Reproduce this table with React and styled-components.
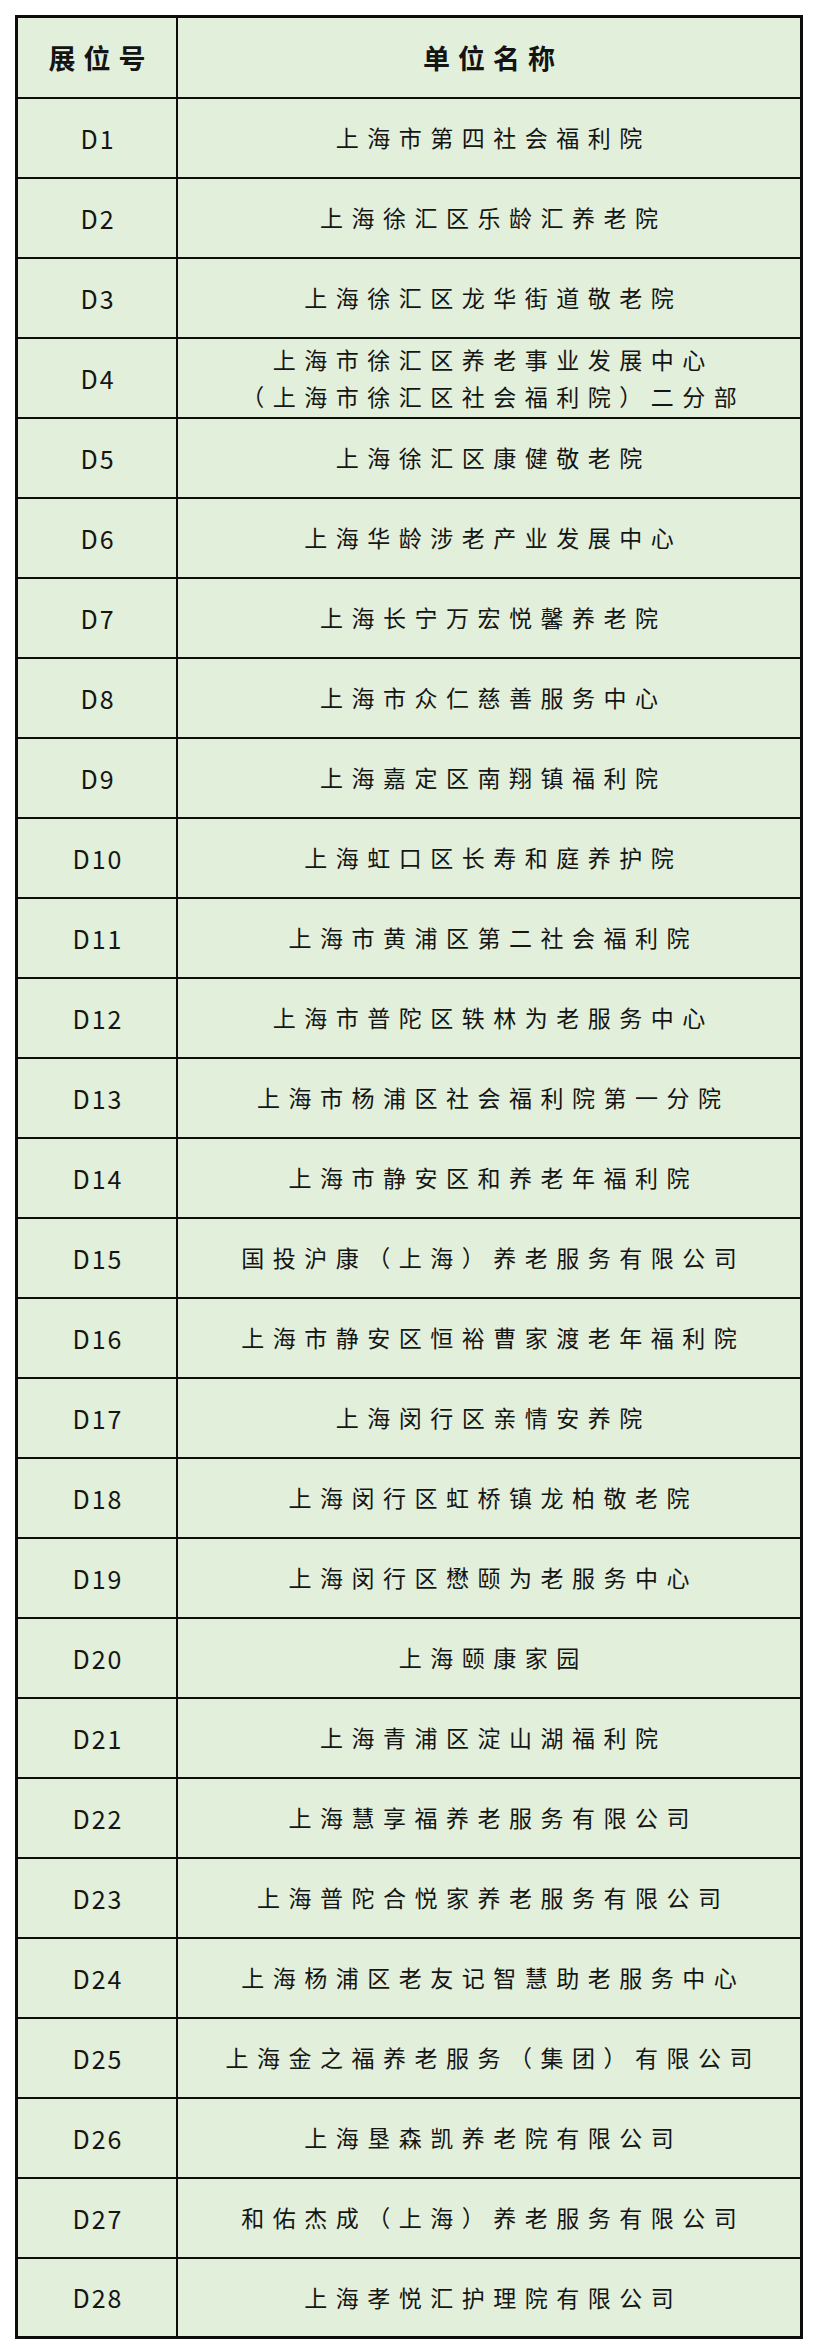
import React from "react";
import styled, { createGlobalStyle } from "styled-components";

const GlobalStyle = createGlobalStyle`
  html, body {
    margin: 0;
    padding: 0;
    background: #ffffff;
  }
  body {
    font-family: "Noto Sans CJK SC", "Noto Sans", sans-serif;
    color: #1b1b1b;
  }
`;

const Page = styled.div`
  width: 818px;
  min-height: 2352px;
  box-sizing: border-box;
  padding: 15px 15px 0 15px;
  background: #ffffff;
`;

const Table = styled.table`
  width: 788px;
  border-collapse: collapse;
  border: 3px solid #0d0d0d;
  background: #e2efda;
  table-layout: fixed;
`;

const Row = styled.tr`
  height: ${(p) => (p.$header ? 81 : 80)}px;
`;

const HeadCell = styled.th`
  border: 2px solid #0d0d0d;
  font-family: "Noto Sans CJK SC", "Noto Sans", sans-serif;
  font-weight: 700;
  font-size: 27px;
  letter-spacing: 8px;
  padding: 0 0 0 8px;
  text-align: center;
  vertical-align: middle;
  color: #141414;
  width: ${(p) => (p.$narrow ? "150px" : "auto")};
`;

const IdCell = styled.td`
  border: 2px solid #0d0d0d;
  font-family: "Noto Sans CJK SC", "Noto Sans", sans-serif;
  font-weight: 400;
  font-size: 25px;
  letter-spacing: 2px;
  padding: 0 0 0 2px;
  text-align: center;
  vertical-align: middle;
  color: #151515;
`;

const NameCell = styled.td`
  border: 2px solid #0d0d0d;
  font-family: "Noto Sans CJK SC", "Noto Sans", sans-serif;
  font-weight: 400;
  font-size: 23px;
  letter-spacing: 8.5px;
  line-height: 37px;
  padding: 0 0 0 8.5px;
  text-align: center;
  vertical-align: middle;
  white-space: nowrap;
  color: #151515;
`;

const rows = [
  ["D1", ["上海市第四社会福利院"]],
  ["D2", ["上海徐汇区乐龄汇养老院"]],
  ["D3", ["上海徐汇区龙华街道敬老院"]],
  ["D4", ["上海市徐汇区养老事业发展中心", "（上海市徐汇区社会福利院）二分部"]],
  ["D5", ["上海徐汇区康健敬老院"]],
  ["D6", ["上海华龄涉老产业发展中心"]],
  ["D7", ["上海长宁万宏悦馨养老院"]],
  ["D8", ["上海市众仁慈善服务中心"]],
  ["D9", ["上海嘉定区南翔镇福利院"]],
  ["D10", ["上海虹口区长寿和庭养护院"]],
  ["D11", ["上海市黄浦区第二社会福利院"]],
  ["D12", ["上海市普陀区轶林为老服务中心"]],
  ["D13", ["上海市杨浦区社会福利院第一分院"]],
  ["D14", ["上海市静安区和养老年福利院"]],
  ["D15", ["国投沪康（上海）养老服务有限公司"]],
  ["D16", ["上海市静安区恒裕曹家渡老年福利院"]],
  ["D17", ["上海闵行区亲情安养院"]],
  ["D18", ["上海闵行区虹桥镇龙柏敬老院"]],
  ["D19", ["上海闵行区懋颐为老服务中心"]],
  ["D20", ["上海颐康家园"]],
  ["D21", ["上海青浦区淀山湖福利院"]],
  ["D22", ["上海慧享福养老服务有限公司"]],
  ["D23", ["上海普陀合悦家养老服务有限公司"]],
  ["D24", ["上海杨浦区老友记智慧助老服务中心"]],
  ["D25", ["上海金之福养老服务（集团）有限公司"]],
  ["D26", ["上海垦森凯养老院有限公司"]],
  ["D27", ["和佑杰成（上海）养老服务有限公司"]],
  ["D28", ["上海孝悦汇护理院有限公司"]],
];

export default function App() {
  return (
    <>
      <GlobalStyle />
      <Page>
        <Table>
          <thead>
            <Row $header>
              <HeadCell $narrow>展位号</HeadCell>
              <HeadCell>单位名称</HeadCell>
            </Row>
          </thead>
          <tbody>
            {rows.map(([id, lines]) => (
              <Row key={id}>
                <IdCell>{id}</IdCell>
                <NameCell>
                  {lines.map((l, i) => (
                    <React.Fragment key={i}>
                      {i > 0 && <br />}
                      {l}
                    </React.Fragment>
                  ))}
                </NameCell>
              </Row>
            ))}
          </tbody>
        </Table>
      </Page>
    </>
  );
}
